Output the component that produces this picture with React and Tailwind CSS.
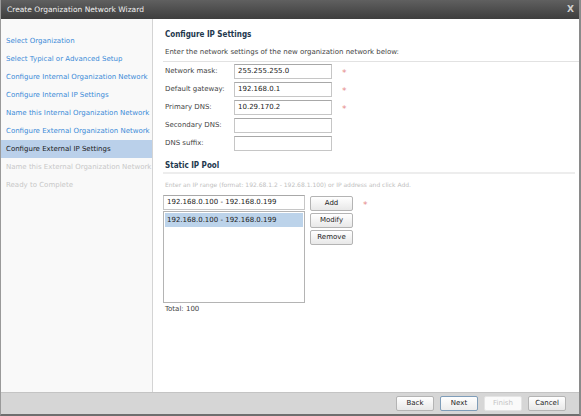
const steps = [
  { label: "Select Organization", state: "done" },
  { label: "Select Typical or Advanced Setup", state: "done" },
  { label: "Configure Internal Organization Network", state: "done" },
  { label: "Configure Internal IP Settings", state: "done" },
  { label: "Name this Internal Organization Network", state: "done" },
  { label: "Configure External Organization Network", state: "done" },
  { label: "Configure External IP Settings", state: "active" },
  { label: "Name this External Organization Network", state: "todo" },
  { label: "Ready to Complete", state: "todo" },
]

const fields = [
  { label: "Network mask:", value: "255.255.255.0", required: true },
  { label: "Default gateway:", value: "192.168.0.1", required: true },
  { label: "Primary DNS:", value: "10.29.170.2", required: true },
  { label: "Secondary DNS:", value: "", required: false },
  { label: "DNS suffix:", value: "", required: false },
]

function Star() {
  return <span className="text-[#e58a8a] text-[9px] leading-none mt-[4px]">*</span>
}

function Btn({ children, disabled, primary, wide }) {
  return (
    <button
      className={
        "h-[15px] rounded-[2px] border text-[7px] leading-none " +
        (wide ? "w-[43px] " : "w-[38px] ") +
        (disabled
          ? "border-[#e4e4e4] bg-[#fafafa] text-[#c4c4c4]"
          : primary
          ? "border-[#7f9db9] bg-gradient-to-b from-white to-[#ececec] text-[#222]"
          : "border-[#b4b4b4] bg-gradient-to-b from-white to-[#e8e8e8] text-[#222]")
      }
    >
      {children}
    </button>
  )
}

export default function App() {
  return (
    <div className="w-[581px] h-[416px] flex flex-col bg-white border-l border-r-2 border-b-2 border-l-[#9a9a9a] border-r-[#8a8a8a] border-b-[#6e6e6e] text-[7px] text-[#333]" style={{ fontFamily: '"DejaVu Sans", Verdana, sans-serif' }}>
      <div className="h-[19px] shrink-0 flex items-center justify-between pl-[6px] pr-[5px] bg-gradient-to-b from-[#606060] to-[#3e3e3e] text-white">
        <span className="text-[7.5px] text-[#f0f0f0]">Create Organization Network Wizard</span>
        <span className="text-[9px] text-[#d0d0d0] font-bold leading-none">X</span>
      </div>
      <div className="flex flex-1 min-h-0">
        <div className="w-[152px] shrink-0 bg-[#f9f9f9] border-r border-[#d4d4d4] pt-[13px]">
          {steps.map((s) => (
            <div
              key={s.label}
              className={
                "h-[18px] leading-[18px] pl-[5px] whitespace-nowrap " +
                (s.state === "active"
                  ? "bg-[#bad0ea] text-[#1a1a1a]"
                  : s.state === "done"
                  ? "text-[#3c8bd8]"
                  : "text-[#c8c8c8]")
              }
            >
              {s.label}
            </div>
          ))}
        </div>
        <div className="flex-1 pl-[10px] pt-[10px]">
          <div className="pl-[2px] font-bold text-[8px] text-[#23384d] h-[12px] leading-[12px]" style={{ fontFamily: '"DejaVu Sans Condensed", "DejaVu Sans", sans-serif' }}>Configure IP Settings</div>
          <div className="pl-[2px] mt-[5px] h-[12px] leading-[12px] text-[#444]">
            Enter the network settings of the new organization network below:
          </div>
          <div className="border-t border-[#e2e2e2] mt-[3px] mb-[2px]"></div>
          <div className="flex flex-col gap-[3px]">
            {fields.map((f) => (
              <div key={f.label} className="flex items-center h-[15px]">
                <span className="pl-[2px] w-[71px] text-[#444]">{f.label}</span>
                <div className="w-[98px] h-[15px] border border-[#c6c6c6] border-t-[#a8a8a8] bg-white pl-[3px] flex items-center text-[#222]">
                  {f.value}
                </div>
                <span className="ml-[10px] flex">{f.required && <Star />}</span>
              </div>
            ))}
          </div>
          <div className="pl-[2px] mt-[9px] font-bold text-[8px] text-[#23384d] h-[12px] leading-[12px]" style={{ fontFamily: '"DejaVu Sans Condensed", "DejaVu Sans", sans-serif' }}>Static IP Pool</div>
          <div className="border-t-2 border-[#ededed] mr-[4px]"></div>
          <div className="pl-[2px] mt-[6px] text-[6px] text-[#c0c0c0] h-[10px] leading-[10px] whitespace-nowrap">
            Enter an IP range (format: 192.68.1.2 - 192.68.1.100) or IP address and click Add.
          </div>
          <div className="flex mt-[5px] gap-[5px]">
            <div className="flex flex-col gap-[1px]">
              <div className="w-[142px] h-[15px] border border-[#c6c6c6] border-t-[#a8a8a8] pl-[3px] flex items-center text-[#222]">
                192.168.0.100 - 192.168.0.199
              </div>
              <div className="w-[142px] h-[92px] border border-[#b4b4b4] p-[1px]">
                <div className="h-[14px] bg-[#bcd3ea] pl-[2px] flex items-center text-[#222]">
                  192.168.0.100 - 192.168.0.199
                </div>
              </div>
            </div>
            <div className="flex flex-col gap-[2px] pt-[1px]">
              <div className="flex items-center gap-[10px]">
                <Btn wide>Add</Btn>
                <Star />
              </div>
              <Btn wide>Modify</Btn>
              <Btn wide>Remove</Btn>
            </div>
          </div>
          <div className="pl-[2px] mt-[1px] h-[10px] leading-[10px] text-[#444]">Total: 100</div>
        </div>
      </div>
      <div className="h-[22px] shrink-0 bg-[#d6d6d6] border-t border-[#c4c4c4] flex items-center justify-end gap-[6px] pr-[13px]">
        <Btn>Back</Btn>
        <Btn primary>Next</Btn>
        <Btn disabled>Finish</Btn>
        <Btn>Cancel</Btn>
      </div>
    </div>
  )
}
